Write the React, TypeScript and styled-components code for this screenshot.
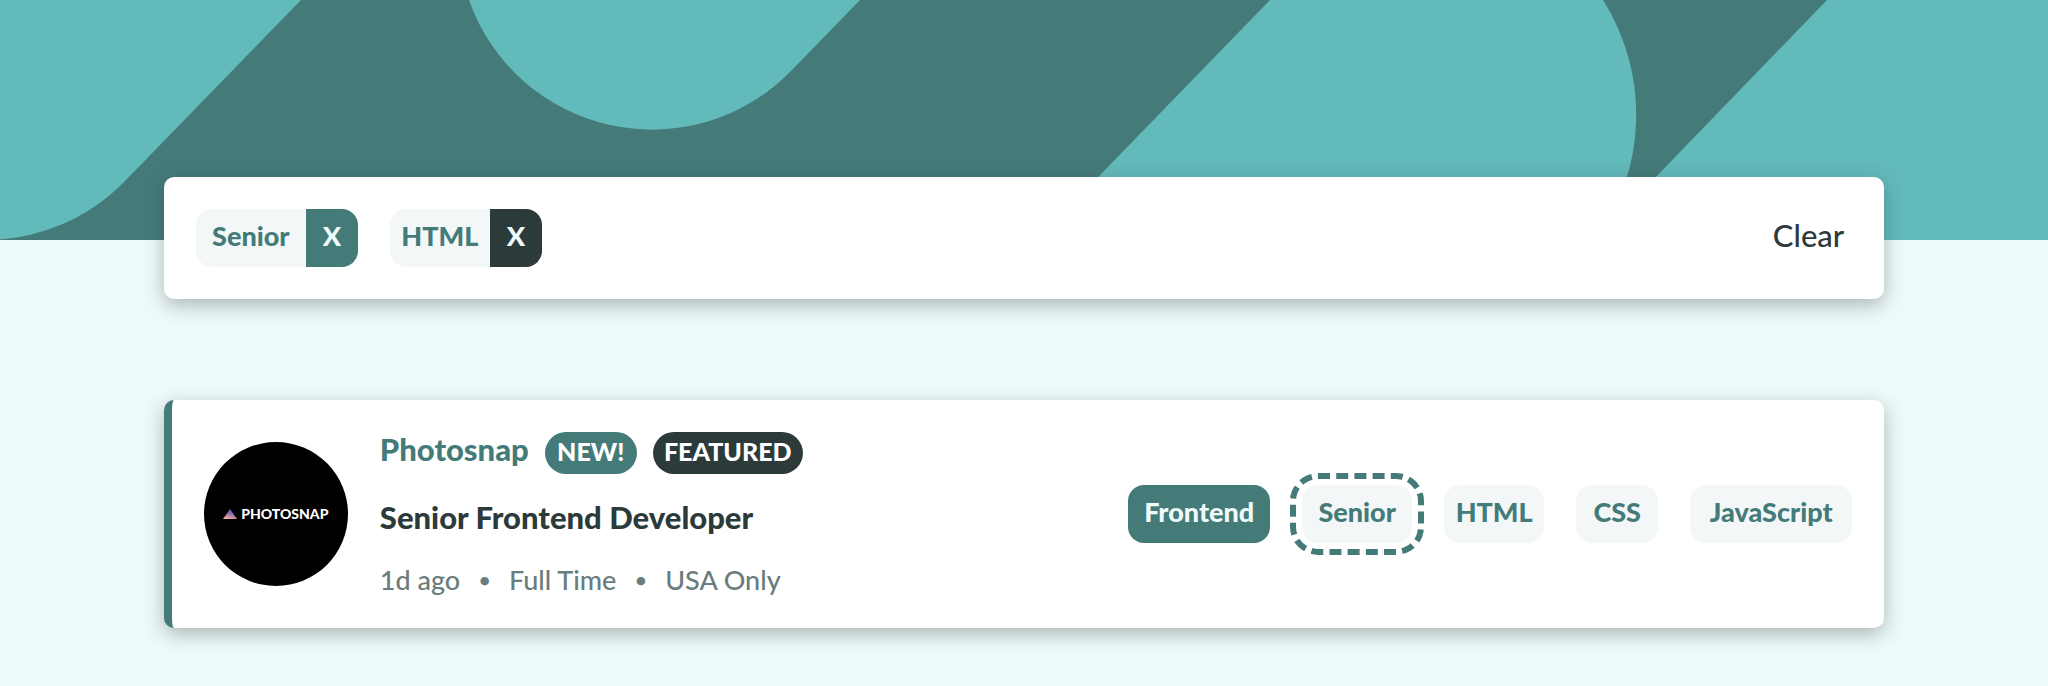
import React from 'react';
import styled, { createGlobalStyle } from 'styled-components';

const color = {
  teal: '#447b79',
  aqua: '#63babb',
  page: '#effafa',
  ink: '#2c3a3a',
  tablet: '#f3f7f8',
  muted: '#6a7c7c',
};

const GlobalStyle = createGlobalStyle`
  *, *::before, *::after { box-sizing: border-box; }
  body {
    margin: 0;
    background: ${color.page};
    color: ${color.ink};
    font-family: Lato, "Liberation Sans", sans-serif;
  }
  button { font-family: inherit; border: 0; cursor: pointer; }
`;

const Pattern = styled.svg`
  display: block;
  width: 100%;
  height: 240px;
  background: ${color.teal};
`;

const Main = styled.main`
  display: flex;
  flex-direction: column;
  gap: 101px;
  margin-top: -63px;
  padding: 0 8% 58px;
`;

const Panel = styled.section`
  display: flex;
  align-items: center;
  justify-content: space-between;
  gap: 32px;
  padding: 32px;
  background: #fff;
  border-radius: 10px;
  box-shadow: 0 6px 20px rgba(44, 58, 58, 0.35);
`;

const FilterBar = styled(Panel)``;

const JobCard = styled(Panel).attrs({ as: 'article' })`
  border-left: 8px solid ${color.teal};
`;

const TagList = styled.ul`
  display: flex;
  flex-wrap: wrap;
  gap: 32px;
  margin: 0;
  padding: 0;
  list-style: none;
`;

const FilterItem = styled.li`
  display: flex;
  overflow: hidden;
  border-radius: 16px;
`;

const FilterName = styled.span<{ $width: number }>`
  display: flex;
  align-items: center;
  justify-content: center;
  width: ${(p) => p.$width}px;
  height: 58px;
  padding-bottom: 6px;
  background: ${color.tablet};
  color: ${color.teal};
  font-size: 27px;
  font-weight: 900;
`;

const RemoveButton = styled.button<{ $active?: boolean }>`
  width: 52px;
  height: 58px;
  padding: 0 0 6px;
  background: ${(p) => (p.$active ? color.ink : color.teal)};
  color: ${color.page};
  font-size: 27px;
  font-weight: 900;
`;

const ClearButton = styled.button`
  padding: 0 8px 6px;
  background: transparent;
  color: ${color.ink};
  font-size: 31px;
  font-weight: 500;
  line-height: 32px;
`;

const TagButton = styled.button<{ $width: number; $selected?: boolean; $outlined?: boolean }>`
  display: block;
  width: ${(p) => p.$width}px;
  height: 58px;
  padding: 0 0 6px;
  border-radius: 16px;
  background: ${(p) => (p.$selected ? color.teal : color.tablet)};
  color: ${(p) => (p.$selected ? color.page : color.teal)};
  font-size: 27px;
  font-weight: 900;
  outline: ${(p) => (p.$outlined ? `6px dashed ${color.teal}` : 'none')};
  outline-offset: 6px;
`;

const Summary = styled.div`
  display: flex;
  align-items: center;
  gap: 32px;
`;

const Logo = styled.div`
  display: flex;
  align-items: center;
  justify-content: center;
  gap: 4px;
  width: 144px;
  height: 144px;
  border-radius: 50%;
  background: #000;
  color: #fff;
  font-size: 14px;
  font-weight: 900;
  line-height: 16px;
`;

const Details = styled.div`
  display: flex;
  flex-direction: column;
  gap: 26px;
`;

const CompanyRow = styled.div`
  display: flex;
  align-items: flex-start;
  gap: 16px;
`;

const Company = styled.span`
  color: ${color.teal};
  font-size: 31px;
  font-weight: 900;
  line-height: 34px;
`;

const Badge = styled.span<{ $dark?: boolean; $width: number }>`
  display: flex;
  align-items: center;
  justify-content: center;
  width: ${(p) => p.$width}px;
  height: 42px;
  padding-bottom: 4px;
  border-radius: 21px;
  background: ${(p) => (p.$dark ? color.ink : color.teal)};
  color: #fff;
  font-size: 25px;
  font-weight: 900;
`;

const Position = styled.h2`
  margin: 0;
  padding-bottom: 4px;
  font-size: 31px;
  font-weight: 900;
  line-height: 34px;
`;

const Meta = styled.div`
  display: flex;
  gap: 18px;
  color: ${color.muted};
  font-size: 27px;
  font-weight: 500;
  line-height: 32px;
`;

const Dot = styled.span`
  font-size: 22px;
`;

const filters = [
  { name: 'Senior', width: 110 },
  { name: 'HTML', width: 100, active: true },
];

const tags = [
  { name: 'Frontend', width: 142, selected: true },
  { name: 'Senior', width: 110, outlined: true },
  { name: 'HTML', width: 100 },
  { name: 'CSS', width: 82 },
  { name: 'JavaScript', width: 162 },
];

export default function App() {
  return (
    <>
      <GlobalStyle />
      <header>
        <Pattern viewBox="0 0 2048 240" preserveAspectRatio="xMidYMid slice" aria-hidden="true">
          <g fill={color.aqua}>
            <path d="M0 0H301L125 181A194 194 0 0 1 -14 240H-20V0Z" />
            <path d="M469 0A194 194 0 0 0 791 71L860 0Z" />
            <path d="M1270 0H1603A215 215 0 0 1 1596 240H1037Z" />
            <path d="M1827 0H2048V240H1595Z" />
          </g>
        </Pattern>
      </header>
      <Main>
        <FilterBar aria-label="Filters">
          <TagList>
            {filters.map((f) => (
              <FilterItem key={f.name}>
                <FilterName $width={f.width}>{f.name}</FilterName>
                <RemoveButton type="button" $active={f.active} aria-label={`Remove ${f.name}`}>
                  X
                </RemoveButton>
              </FilterItem>
            ))}
          </TagList>
          <ClearButton type="button">Clear</ClearButton>
        </FilterBar>
        <JobCard>
          <Summary>
            <Logo>
              <svg width="14" height="10" viewBox="0 0 14 10" aria-hidden="true">
                <defs>
                  <linearGradient id="peak" x1="0.6" y1="0" x2="0.3" y2="1">
                    <stop offset="0.1" stopColor="#4f58c8" />
                    <stop offset="0.5" stopColor="#9a6cb0" />
                    <stop offset="1" stopColor="#f2b28c" />
                  </linearGradient>
                </defs>
                <path d="M7 0L14 10H0Z" fill="url(#peak)" />
              </svg>
              <span>PHOTOSNAP</span>
            </Logo>
            <Details>
              <CompanyRow>
                <Company>Photosnap</Company>
                <Badge $width={92}>NEW!</Badge>
                <Badge $width={150} $dark>FEATURED</Badge>
              </CompanyRow>
              <Position>Senior Frontend Developer</Position>
              <Meta>
                <span>1d ago</span>
                <Dot>•</Dot>
                <span>Full Time</span>
                <Dot>•</Dot>
                <span>USA Only</span>
              </Meta>
            </Details>
          </Summary>
          <TagList>
            {tags.map((t) => (
              <li key={t.name}>
                <TagButton type="button" $width={t.width} $selected={t.selected} $outlined={t.outlined}>
                  {t.name}
                </TagButton>
              </li>
            ))}
          </TagList>
        </JobCard>
      </Main>
    </>
  );
}
